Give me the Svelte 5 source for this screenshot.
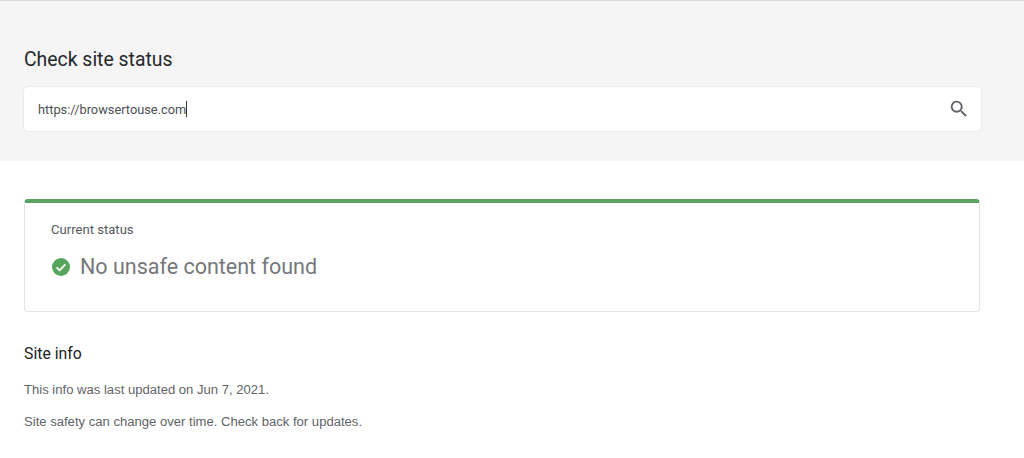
<script lang="ts">
	let url = 'https://browsertouse.com';
</script>

<div class="page">
	<header class="search-band">
		<h1>Check site status</h1>
		<div class="search-box">
			<span class="url">{url}</span><span class="caret"></span>
			<svg class="search-icon" viewBox="0 0 24 24" width="22" height="22" aria-hidden="true">
				<path
					d="M15.5 14h-.79l-.28-.27A6.47 6.47 0 0 0 16 9.5 6.5 6.5 0 1 0 9.5 16c1.61 0 3.09-.59 4.23-1.57l.27.28v.79l5 4.99L20.49 19l-4.99-5zm-6 0C7.01 14 5 11.99 5 9.5S7.01 5 9.5 5 14 7.01 14 9.5 11.99 14 9.5 14z"
				/>
			</svg>
		</div>
	</header>

	<main class="content">
		<section class="status-card">
			<div class="status-label">Current status</div>
			<div class="status-row">
				<svg viewBox="0 0 20 20" width="20" height="20" aria-hidden="true">
					<circle cx="10" cy="10" r="9" fill="#58a55c" />
					<path d="M5.6 10.3l3 3 5.8-6" fill="none" stroke="#fff" stroke-width="1.8" />
				</svg>
				<span>No unsafe content found</span>
			</div>
		</section>

		<h2>Site info</h2>
		<p>This info was last updated on Jun 7, 2021.</p>
		<p>Site safety can change over time. Check back for updates.</p>
	</main>
</div>

<style>
	:global(body) {
		background: #fff;
		overflow: hidden;
	}

	.page {
		width: 1024px;
		height: 458px;
		font-family: 'Liberation Sans', Arial, sans-serif;
	}

	.search-band {
		height: 161px;
		box-sizing: border-box;
		padding: 48px 43px 0 24px;
		background: #f5f5f5;
		border-top: 1px solid #dcdcdc;
	}

	h1 {
		margin: 0 0 16px;
		font-family: Roboto, sans-serif;
		font-size: 19.4px;
		font-weight: 400;
		line-height: 22px;
		color: #25272a;
	}

	.search-box {
		display: flex;
		align-items: center;
		height: 44px;
		box-sizing: border-box;
		padding: 0 11px 0 14px;
		background: #fff;
		border-radius: 4px;
		box-shadow: 0 0 2px rgba(0, 0, 0, 0.14);
	}

	.url {
		font-family: Roboto, sans-serif;
		font-size: 12.8px;
		color: #4d4f53;
	}

	.caret {
		width: 1px;
		height: 16px;
		background: #333;
	}

	.search-icon {
		margin-left: auto;
		fill: #5f6368;
	}

	.content {
		padding: 38px 44px 0 24px;
	}

	.status-card {
		height: 113px;
		box-sizing: border-box;
		padding: 19px 26px 0;
		border: 1px solid #e4e4e4;
		border-top: 4px solid #5ba360;
		border-radius: 4px;
	}

	.status-label {
		font-family: Roboto, sans-serif;
		font-size: 13.1px;
		line-height: 16px;
		color: #56585c;
	}

	.status-row {
		display: flex;
		align-items: center;
		gap: 9px;
		margin-top: 15px;
		font-family: Roboto, sans-serif;
		font-size: 21.5px;
		line-height: 28px;
		color: #75777a;
	}

	h2 {
		margin: 32px 0 0;
		font-family: Roboto, sans-serif;
		font-size: 15.8px;
		font-weight: 400;
		line-height: 20px;
		color: #202124;
	}

	p {
		margin: 16px 0 0;
		font-size: 13.08px;
		line-height: 16px;
		color: #5f6368;
	}

	h2 + p {
		margin-top: 18px;
	}
</style>
